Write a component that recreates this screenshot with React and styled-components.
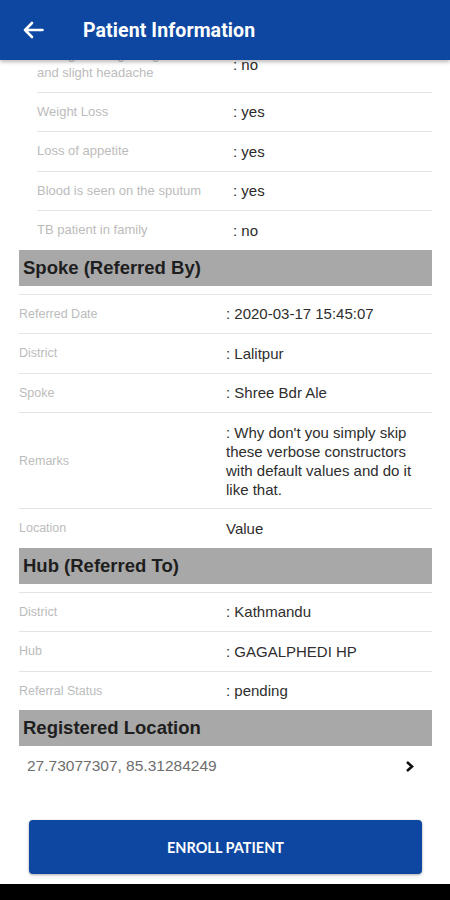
import { useLayoutEffect, useRef } from "react";
import styled, { createGlobalStyle } from "styled-components";

const symptoms = [
  { label: "Cough for more than two weeks", value: ": yes" },
  { label: "Fever", value: ": yes" },
  { label: "During evening rising fever and slight headache", value: ": no", anchor: true },
  { label: "Weight Loss", value: ": yes" },
  { label: "Loss of appetite", value: ": yes" },
  { label: "Blood is seen on the sputum", value: ": yes" },
  { label: "TB patient in family", value: ": no" },
];

const spoke = [
  { label: "Referred Date", value: ": 2020-03-17 15:45:07" },
  { label: "District", value: ": Lalitpur" },
  { label: "Spoke", value: ": Shree Bdr Ale" },
  {
    label: "Remarks",
    value:
      ": Why don't you simply skip these verbose constructors with default values and do it like that.",
  },
  { label: "Location", value: "Value" },
];

const hub = [
  { label: "District", value: ": Kathmandu" },
  { label: "Hub", value: ": GAGALPHEDI HP" },
  { label: "Referral Status", value: ": pending" },
];

function BackArrow() {
  return (
    <svg width="22" height="18" viewBox="0 0 22 18" fill="none">
      <path
        d="M20.5 9H3M10 2L3 9l7 7"
        stroke="#fff"
        strokeWidth="2.6"
        strokeLinecap="round"
        strokeLinejoin="round"
      />
    </svg>
  );
}

function Chevron() {
  return (
    <svg width="9" height="13" viewBox="0 0 9 13" fill="none">
      <path d="M2 2l5 4.5L2 11" stroke="#111" strokeWidth="2.6" strokeLinejoin="miter" />
    </svg>
  );
}

function App() {
  const scrollRef = useRef(null);
  const anchorRef = useRef(null);

  // the list is shown scrolled part way down
  useLayoutEffect(() => {
    if (scrollRef.current && anchorRef.current) {
      scrollRef.current.scrollTop = anchorRef.current.offsetTop + 24;
    }
  }, []);

  return (
    <StyledApp>
      <GlobalStyle />
      <TopBar>
        <BackArrow />
        <Title>Patient Information</Title>
      </TopBar>
      <Scroller ref={scrollRef}>
        <SectionTitle>Symptoms</SectionTitle>
        {symptoms.map((item) => (
          <Row key={item.label} $inset ref={item.anchor ? anchorRef : null}>
            <Label $inset>{item.label}</Label>
            <Value $inset>{item.value}</Value>
          </Row>
        ))}
        <SectionTitle>Spoke (Referred By)</SectionTitle>
        {spoke.map((item) => (
          <Row key={item.label}>
            <Label>{item.label}</Label>
            <Value>{item.value}</Value>
          </Row>
        ))}
        <SectionTitle>Hub (Referred To)</SectionTitle>
        {hub.map((item) => (
          <Row key={item.label}>
            <Label>{item.label}</Label>
            <Value>{item.value}</Value>
          </Row>
        ))}
        <SectionTitle $flush>Registered Location</SectionTitle>
        <LocationRow>
          <Coords>27.73077307, 85.31284249</Coords>
          <Chevron />
        </LocationRow>
      </Scroller>
      <Footer>
        <EnrollButton>ENROLL PATIENT</EnrollButton>
      </Footer>
      <NavBar />
    </StyledApp>
  );
}

const GlobalStyle = createGlobalStyle`
  html, body, #root {
    height: 100%;
  }
  body {
    margin: 0;
    background: #fff;
    font-family: "Liberation Sans", Arial, sans-serif;
  }
  * {
    box-sizing: border-box;
  }
`;

const StyledApp = styled.div`
  height: 100vh;
  display: flex;
  flex-direction: column;
  background: #fff;
  overflow: hidden;
`;

const TopBar = styled.header`
  height: 60px;
  flex: 0 0 60px;
  background: #0e47a1;
  display: flex;
  align-items: center;
  padding-left: 22px;
  gap: 39px;
  box-shadow: 0 2px 4px rgba(0, 0, 0, 0.28);
  position: relative;
  z-index: 1;
`;

const Title = styled.h1`
  margin: 0;
  color: #fff;
  font-family: Roboto, "Liberation Sans", sans-serif;
  font-weight: 700;
  font-size: 19.5px;
  letter-spacing: 0.1px;
`;

const Scroller = styled.div`
  flex: 1;
  overflow: hidden;
  position: relative;
  padding: 0 18px 60px 19px;
`;

const SectionTitle = styled.h2`
  margin: 0 0 ${(p) => (p.$flush ? "0" : "8px")};
  height: 36px;
  display: flex;
  align-items: center;
  padding-left: 4px;
  background: #a8a8a8;
  color: #1e1e1e;
  font-size: 18.5px;
  font-weight: 700;
`;

const Row = styled.div`
  display: flex;
  align-items: center;
  min-height: 39.5px;
  padding: 9.5px 0;
  margin-left: ${(p) => (p.$inset ? "18px" : "0")};
  border-top: 1px solid #e4e4e4;
`;

const Label = styled.div`
  flex: 0 0 ${(p) => (p.$inset ? "196px" : "207px")};
  padding-right: ${(p) => (p.$inset ? "20px" : "12px")};
  color: #bcbcbc;
  font-size: ${(p) => (p.$inset ? "13px" : "12.5px")};
  line-height: 18px;
`;

const Value = styled.div`
  flex: 1;
  padding-right: 12px;
  color: ${(p) => (p.$inset ? "#2a2a2a" : "#2e2e2e")};
  font-size: 15px;
  line-height: 19px;
`;

const LocationRow = styled.div`
  display: flex;
  align-items: center;
  justify-content: space-between;
  height: 40px;
  padding: 0 18px 0 8px;
`;

const Coords = styled.span`
  color: #6e6e6e;
  font-size: 15.5px;
`;

const Footer = styled.div`
  flex: 0 0 auto;
  padding: 16px 28px 10px 29px;
`;

const EnrollButton = styled.button`
  width: 100%;
  height: 54px;
  border: none;
  border-radius: 4px;
  background: #0e47a1;
  color: #fff;
  font-family: Lato, "Liberation Sans", sans-serif;
  font-weight: 700;
  font-size: 14.5px;
  box-shadow: 0 1px 3px rgba(0, 0, 0, 0.35);
`;

const NavBar = styled.div`
  flex: 0 0 16px;
  background: #000;
`;

export default App;
